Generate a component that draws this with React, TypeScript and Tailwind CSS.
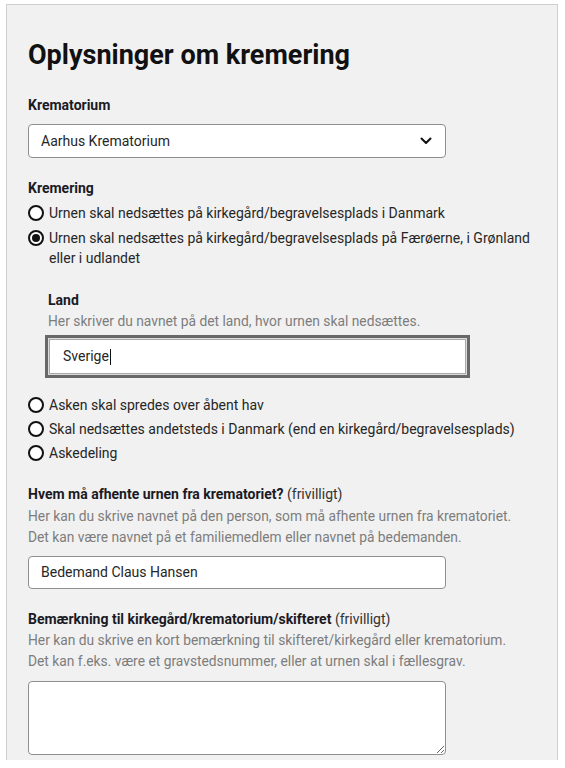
import React from "react";

const Radio = ({ checked }: { checked?: boolean }) => (
  <span className="mt-[2px] flex h-[16px] w-[16px] shrink-0 items-center justify-center rounded-full border-2 border-[#111] bg-white">
    {checked && <span className="h-[8px] w-[8px] rounded-full bg-[#111]" />}
  </span>
);

const RadioRow = ({ checked, children }: { checked?: boolean; children: React.ReactNode }) => (
  <div className="flex items-start gap-[5px] text-[14px] leading-[20px] text-[#262626]">
    <Radio checked={checked} />
    <span>{children}</span>
  </div>
);

export default function App() {
  return (
    <div className="min-h-[768px] bg-white" style={{ fontFamily: "Roboto, 'Noto Sans', sans-serif" }}>
      <div className="ml-[6px] mt-[4px] h-[756px] w-[552px] border-l border-r border-t border-[#cfcfcf] bg-[#f1f1f1] pl-[21px] pr-[10px]">
        <h1 className="mt-[33px] text-[27px] font-bold leading-[34px] text-[#111]">Oplysninger om kremering</h1>

        <div className="mt-[23px] text-[14px] font-bold leading-[20px] text-[#1a1a24]">Krematorium</div>
        <div className="mt-[9px] flex h-[34px] w-[418px] items-center justify-between rounded-[4px] border border-[#8f8f8f] bg-white pl-[12px] pr-[13px] text-[14px] text-[#262626]">
          <span>Aarhus Krematorium</span>
          <svg width="12" height="8" viewBox="0 0 12 8" fill="none">
            <path d="M1.5 1.5 L6 6 L10.5 1.5" stroke="#111" strokeWidth="2" strokeLinecap="round" strokeLinejoin="round" />
          </svg>
        </div>

        <div className="mt-[20px] text-[14px] font-bold leading-[20px] text-[#1a1a24]">Kremering</div>
        <div className="mt-[5px] flex flex-col gap-[5px]">
          <RadioRow>Urnen skal nedsættes på kirkegård/begravelsesplads i Danmark</RadioRow>
          <RadioRow checked>
            Urnen skal nedsættes på kirkegård/begravelsesplads på Færøerne, i Grønland eller i udlandet
          </RadioRow>
        </div>

        <div className="ml-[20px] mt-[22px]">
          <div className="text-[14px] font-bold leading-[20px] text-[#1a1a24]">Land</div>
          <div className="mt-[1px] text-[13.8px] leading-[20px] text-[#7d7d7d]">
            Her skriver du navnet på det land, hvor urnen skal nedsættes.
          </div>
          <div className="ml-[-3px] mt-[4px] h-[43px] w-[425px] border-[3px] border-[#686868] bg-[#dcdcdc] p-px">
            <div className="flex h-full items-center border border-[#a8a8a8] bg-white pl-[13px] text-[14px] text-[#262626]">
              Sverige<span className="ml-px inline-block h-[16px] w-px bg-[#111]" />
            </div>
          </div>
        </div>

        <div className="mt-[17px] flex flex-col gap-[4px]">
          <RadioRow>Asken skal spredes over åbent hav</RadioRow>
          <RadioRow>Skal nedsættes andetsteds i Danmark (end en kirkegård/begravelsesplads)</RadioRow>
          <RadioRow>Askedeling</RadioRow>
        </div>

        <div className="mt-[21px] text-[14px] leading-[20px] text-[#1a1a24]">
          <span className="font-bold">Hvem må afhente urnen fra krematoriet?</span>{" "}
          <span className="text-[#333]">(frivilligt)</span>
        </div>
        <div className="mt-[2px] text-[13.8px] leading-[21px] text-[#7d7d7d]">
          Her kan du skrive navnet på den person, som må afhente urnen fra krematoriet.
          <br />
          Det kan være navnet på et familiemedlem eller navnet på bedemanden.
        </div>
        <div className="mt-[8px] flex h-[33px] w-[418px] items-center rounded-[4px] border border-[#8f8f8f] bg-white pl-[12px] text-[14px] text-[#262626]">
          Bedemand Claus Hansen
        </div>

        <div className="mt-[20px] text-[14px] leading-[20px] text-[#1a1a24]">
          <span className="font-bold">Bemærkning til kirkegård/krematorium/skifteret</span>{" "}
          <span className="text-[#333]">(frivilligt)</span>
        </div>
        <div className="mt-[1px] text-[13.8px] leading-[21px] text-[#7d7d7d]">
          Her kan du skrive en kort bemærkning til skifteret/kirkegård eller krematorium.
          <br />
          Det kan f.eks. være et gravstedsnummer, eller at urnen skal i fællesgrav.
        </div>
        <textarea
          className="mt-[9px] block h-[74px] w-[418px] rounded-[4px] border border-[#8f8f8f] bg-white"
          defaultValue=""
        />
      </div>
    </div>
  );
}
